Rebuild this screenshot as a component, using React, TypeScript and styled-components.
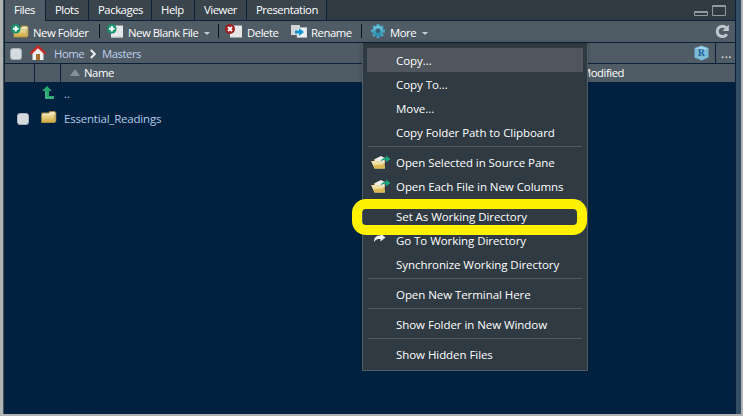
import React from 'react';
import styled, { createGlobalStyle, css } from 'styled-components';

const line = '#0b2139';
const bar = '#4f5b65';
const dark = '#303a42';

const GlobalStyle = createGlobalStyle`
  * { box-sizing: border-box; }
  body { margin: 0; overflow: hidden; background: #b2b5b2; }
`;

const Frame = styled.div`
  width: 743px;
  height: 416px;
  padding: 0 2px 2px 3px;
  background: linear-gradient(90deg, #b0b4b2, #b2b3b0);
  font: 11.5px/16px 'Open Sans', 'Noto Sans', sans-serif;
  color: #fff;
  position: relative;
`;

const Pane = styled.div`
  height: 414px;
  border-left: 1px solid #45515b;
  border-right: 5px solid #354e67;
  background: #002240;
  display: flex;
  flex-direction: column;
`;

const Inner = styled.div`
  border-left: 1px solid ${line};
  border-right: 1px solid ${line};
  flex: 1;
`;

const TabBar = styled.div`
  height: 21px;
  display: flex;
  background: ${dark};
  box-shadow: inset 0 -1px ${line};
`;

const Tab = styled.div<{ $w: number; $active?: boolean }>`
  width: ${p => p.$w}px;
  height: ${p => (p.$active ? 21 : 20)}px;
  padding: 2px 0 0 9px;
  border-right: 1px solid ${line};
  background: ${p => (p.$active ? bar : '#39444d')};
`;

const WindowButtons = styled.div`
  margin-left: auto;
  padding: 4px 8px 0 0;
`;

const Toolbar = styled.div`
  height: 22px;
  display: flex;
  background: ${bar};
  border-bottom: 1px solid ${line};
`;

const Tool = styled.div<{ $w: number; $gap?: number }>`
  width: ${p => p.$w}px;
  display: flex;
  align-items: flex-start;
  padding-left: ${p => p.$gap ?? 7}px;
  svg { margin-top: 3px; flex: none; }
`;

const Label = styled.span<{ $ls?: number; $left?: number }>`
  display: block;
  white-space: nowrap;
  letter-spacing: ${p => p.$ls ?? -0.06}px;
  margin-left: ${p => p.$left ?? 0}px;
`;

const SmallLabel = styled(Label)`
  font-size: 11.3px;
  letter-spacing: ${p => p.$ls ?? -0.45}px;
`;

const ToolLabel = styled(SmallLabel)`
  margin-top: 4px;
`;

const FileLabel = styled(Label)`
  margin-top: 4px;
`;

const Caret = styled.i`
  flex: none;
  width: 6px;
  height: 3px;
  margin: 11px 0 0 6px;
  border: 3px solid transparent;
  border-top-color: #c5cbd0;
  border-bottom: 0;
`;

const Divider = styled.i`
  width: 1px;
  height: 14px;
  margin-top: 3px;
  background: #0c1319;
`;

const Refresh = styled.div`
  margin: 3px 5px 0 auto;
`;

const PathBar = styled.div`
  height: 21px;
  display: flex;
  background: ${bar};
  border-bottom: 1px solid ${line};
  color: #bfd0ee;
`;

const Box = styled.i<{ $top: number }>`
  width: 12px;
  height: 12px;
  margin: ${p => p.$top}px 0 0 5px;
  border-radius: 3px;
  background: #d5dadf;
  border: 1px solid #a8b0b8;
  flex: none;
`;

const PathIcon = styled.div`
  margin: 2px 0 0 8px;
  height: 16px;
`;

const Crumb = styled(ToolLabel)<{ $w: number }>`
  margin-top: 3px;
  width: ${p => p.$w}px;
`;

const CrumbArrow = styled.div`
  width: 12px;
  padding-top: 6px;
  svg { display: block; }
`;

const PathEnd = styled.div`
  margin-left: auto;
  display: flex;
`;

const More = styled.div`
  width: 20px;
  margin-left: 6px;
  border-left: 1px solid ${line};
  padding: 3px 0 0 5px;
  font-size: 12px;
  letter-spacing: 0.5px;
  color: #fff;
`;

const Header = styled.div`
  height: 18px;
  display: flex;
  background: ${bar};
`;

const Cell = styled.div<{ $w?: number }>`
  ${p => (p.$w ? css`width: ${p.$w}px;` : css`flex: 1;`)}
  border-right: ${p => (p.$w && p.$w < 100 ? `1px solid ${line}` : '0')};
  display: flex;
  align-items: flex-start;
  padding-top: 1px;
`;

const Sort = styled.i`
  width: 10px;
  height: 7px;
  border: 5px solid transparent;
  border-top: 0;
  border-bottom: 7px solid #87919a;
  margin: 4px 0 0 9px;
`;

const FileRow = styled.div<{ $h: number }>`
  height: ${p => p.$h}px;
  display: flex;
  color: #b7c9e8;
`;

const RowCheck = styled.div`
  width: 36px;
  padding-left: 7px;
  display: flex;
`;

const RowIcon = styled.div<{ $top: number }>`
  width: 23px;
  padding-top: ${p => p.$top}px;
`;

const Menu = styled.div`
  position: absolute;
  left: 362px;
  top: 43px;
  width: 226px;
  height: 328px;
  padding: 4px;
  border: 1px solid #4f5b65;
  border-top-color: #2b353d;
  background: ${dark};
  box-shadow: 0 0 5px rgba(0, 0, 0, 0.2);
`;

const Item = styled.div<{ $on?: boolean }>`
  height: 24px;
  display: flex;
  padding-top: 5px;
  background: ${p => (p.$on ? '#4f565d' : 'transparent')};
`;

const ItemIcon = styled.div`
  width: 29px;
  height: 18px;
  padding-left: 4px;
`;

const Rule = styled.div`
  height: 6px;
  margin: 0 1px;
  padding-top: 2px;
  &::before { content: ''; display: block; height: 1px; background: #4e5962; }
`;

const Highlight = styled.div`
  position: absolute;
  left: 352px;
  top: 199px;
  width: 235px;
  height: 36px;
  border: 10px solid #fff200;
  border-radius: 14px;
`;

const Plus = () => (
  <g>
    <circle cx="4.8" cy="4.8" r="4.8" fill="#16936e" />
    <path d="M4.8 2v5.6M2 4.8h5.6" stroke="#fff" strokeWidth="2" />
  </g>
);

const FolderShape = () => (
  <g>
    <path d="M0 3.500 1 2.500h6l1.500-1.500H13l2 1V11l-1.500 2H0z" fill="#a08a48" />
    <path d="M1 3.500h6.500L9 2h4l1 1v2H1z" fill="#efe3b8" />
    <path d="M.5 5H13v7.300H.5z" fill="url(#folderFill)" />
    <path d="m13 5 1.500-2V11L13 12.500z" fill="#cdb36a" />
  </g>
);

const Defs = () => (
  <defs>
    <linearGradient id="folderFill" x2="0" y2="1">
      <stop stopColor="#ecdd9f" /><stop offset="1" stopColor="#d0a83c" />
    </linearGradient>
    <linearGradient id="gearFill" x2="0" y2="1">
      <stop stopColor="#7dcbe5" /><stop offset="1" stopColor="#2588aa" />
    </linearGradient>
  </defs>
);

const Folder = () => <svg width="16" height="14" viewBox="0 0 15.5 14" display="block"><Defs /><FolderShape /></svg>;
const NewFolder = () => (
  <svg width="18" height="15"><Defs /><g transform="translate(2.500 .5)"><FolderShape /></g><Plus /></svg>
);
const NewFile = () => (
  <svg width="17" height="15"><path d="M4 1.5h12v12H4z" fill="#e6e7e8" /><path d="M4 13h12" stroke="#c4c8cb" /><Plus /></svg>
);
const DeleteIcon = () => (
  <svg width="17" height="15">
    <path d="M5 1.5h12v12H5z" fill="#e6e7e8" />
    <circle cx="5" cy="5" r="5" fill="#a02020" />
    <path d="m3 3 4 4m0-4L3 7" stroke="#fff" strokeWidth="1.9" />
  </svg>
);
const RenameIcon = () => (
  <svg width="16" height="15">
    <path d="M0 1h9v10H0z" fill="#d2d6d8" />
    <path d="M6 3.5h10v10H6z" fill="#eceeef" stroke="#b8bec3" strokeWidth=".5" />
    <path d="M4 6.500h4V4l5 4-5 4V9.500H4z" fill="#1095ce" />
  </svg>
);
const Gear = () => (
  <svg width="14" height="14" viewBox="-7 -7 14 14">
    <Defs />
    {[0, 45, 90, 135].map(a => <path key={a} d="M-1.5-7h3V7h-3z" transform={`rotate(${a})`} fill="#45a6c6" />)}
    <circle r="5.2" fill="url(#gearFill)" />
    <circle r="2.2" fill="#3e5c6c" stroke="#2c7892" />
  </svg>
);
const Home = () => (
  <svg width="16" height="16" display="block">
    <path d="M2.500 7.500 8 2.500l5.500 5V15h-11z" fill="#edf0f1" />
    <path d="M6 9h4v6H6z" fill="#a8702c" />
    <path d="M.6 8.800 8 1.600l7.400 7.200" fill="none" stroke="#c9281f" strokeWidth="2.200" />
  </svg>
);
const Chevron = () => (
  <svg width="6" height="10"><path d="m.8 1 4 4-4 4" fill="none" stroke="#eceff1" strokeWidth="2" /></svg>
);
const RCube = () => (
  <svg width="15" height="16" display="block">
    <path d="m7.500.5 7 2.500v9.500l-7 3-7-3V3z" fill="#7cbbd8" />
    <path d="m7.500 1.500 6 2-6 2-6-2z" fill="#a5d7e8" />
    <text x="4" y="10.500" fontFamily="Liberation Serif" fontWeight="700" fontSize="9.500" fill="#195f98">R</text>
  </svg>
);
const UpArrow = () => (
  <svg width="14" height="14" display="block">
    <path d="M6 0 1 5h3v8h9v-3H8V5h3z" fill="#27a871" />
    <path d="M5 5v7h7" fill="none" stroke="#57c795" strokeWidth=".7" />
  </svg>
);
const OpenFolder = () => (
  <svg width="20" height="15" display="block">
    <path d="M3 4h3l1-1.500h7V13H3z" fill="#b7a35f" />
    <path d="m4 4 6-3 3.500 2v5H4z" fill="#eeefec" />
    <path d="M0 6h11.500L14 13.500H3.500z" fill="#f0dfa6" />
    <path d="m2 10 10.800-.5L14 13.500H3.500z" fill="#dcb955" />
    <path d="M9.500 6.500C10 4 12 3 15 3V.5L19.500 4 15 7.500V5c-2.500 0-4 .3-5.500 1.500z" fill="#1ba77d" />
  </svg>
);
const GoArrow = () => (
  <svg width="19" height="13" display="block">
    <path d="M3 9c0-5 2.500-6.500 6.500-6.500V.5l5 4-5 4V6C6.500 6 4.500 6.500 3 9z" fill="#f1f2f3" />
  </svg>
);

type Entry = { text: string; icon?: 'open' | 'go'; on?: boolean } | null;
const entries: Entry[] = [
  { text: 'Copy...', on: true },
  { text: 'Copy To...' },
  { text: 'Move...' },
  { text: 'Copy Folder Path to Clipboard' },
  null,
  { text: 'Open Selected in Source Pane', icon: 'open' },
  { text: 'Open Each File in New Columns', icon: 'open' },
  null,
  { text: 'Set As Working Directory' },
  { text: 'Go To Working Directory', icon: 'go' },
  { text: 'Synchronize Working Directory' },
  null,
  { text: 'Open New Terminal Here' },
  null,
  { text: 'Show Folder in New Window' },
  null,
  { text: 'Show Hidden Files' },
];

export default function App() {
  return (
    <Frame>
      <GlobalStyle />
      <Pane>
        <Inner>
          <TabBar>
            <Tab $w={41} $active><SmallLabel>Files</SmallLabel></Tab>
            <Tab $w={43}><SmallLabel>Plots</SmallLabel></Tab>
            <Tab $w={63}><SmallLabel>Packages</SmallLabel></Tab>
            <Tab $w={43}><SmallLabel>Help</SmallLabel></Tab>
            <Tab $w={52}><SmallLabel>Viewer</SmallLabel></Tab>
            <Tab $w={80}><SmallLabel>Presentation</SmallLabel></Tab>
            <WindowButtons>
              <svg width="33" height="14" display="block" fill="none" stroke="#929a9f">
                <path d="M.5 7.500h13v4H.5zM1 8.500h12M18.500 1.500h13v10h-13zM19 2.500h12" />
              </svg>
            </WindowButtons>
          </TabBar>
          <Toolbar>
            <Tool $w={94} $gap={6}><NewFolder /><ToolLabel $left={4}>New Folder</ToolLabel></Tool>
            <Divider />
            <Tool $w={118}><NewFile /><ToolLabel $left={4}>New Blank File</ToolLabel><Caret /></Tool>
            <Divider />
            <Tool $w={67} $gap={6}><DeleteIcon /><ToolLabel $left={5}>Delete</ToolLabel></Tool>
            <Tool $w={75} $gap={5}><RenameIcon /><ToolLabel $left={4}>Rename</ToolLabel></Tool>
            <Divider />
            <Tool $w={90} $gap={9}><Gear /><ToolLabel $left={5}>More</ToolLabel><Caret /></Tool>
            <Refresh>
              <svg width="15" height="15" display="block">
                <path d="M11.800 10.200A5.200 5.200 0 1 1 11 3.600" fill="none" stroke="#c0c7ce" strokeWidth="3" />
                <path d="M13.800.5V7H7.500z" fill="#c0c7ce" />
              </svg>
            </Refresh>
          </Toolbar>
          <PathBar>
            <Box $top={5} />
            <PathIcon><Home /></PathIcon>
            <Crumb $w={36} $left={8}>Home</Crumb>
            <CrumbArrow><Chevron /></CrumbArrow>
            <Crumb $w={50}>Masters</Crumb>
            <PathEnd><PathIcon><RCube /></PathIcon><More>...</More></PathEnd>
          </PathBar>
          <Header>
            <Cell $w={30} /><Cell $w={26} />
            <Cell $w={516}><Sort /><SmallLabel $left={4}>Name</SmallLabel></Cell>
            <Cell><SmallLabel $left={4}>Modified</SmallLabel></Cell>
          </Header>
          <FileRow $h={25}>
            <RowCheck /><RowIcon $top={4}><UpArrow /></RowIcon><FileLabel>..</FileLabel>
          </FileRow>
          <FileRow $h={24}>
            <RowCheck><Box $top={6} /></RowCheck><RowIcon $top={3}><Folder /></RowIcon><FileLabel $ls={-0.2}>Essential_Readings</FileLabel>
          </FileRow>
        </Inner>
      </Pane>
      <Menu>
        {entries.map((e, i) => e ? (
          <Item key={i} $on={e.on}>
            <ItemIcon>{e.icon === 'open' ? <OpenFolder /> : e.icon === 'go' ? <GoArrow /> : null}</ItemIcon>
            <Label>{e.text}</Label>
          </Item>
        ) : <Rule key={i} />)}
      </Menu>
      <Highlight />
    </Frame>
  );
}
